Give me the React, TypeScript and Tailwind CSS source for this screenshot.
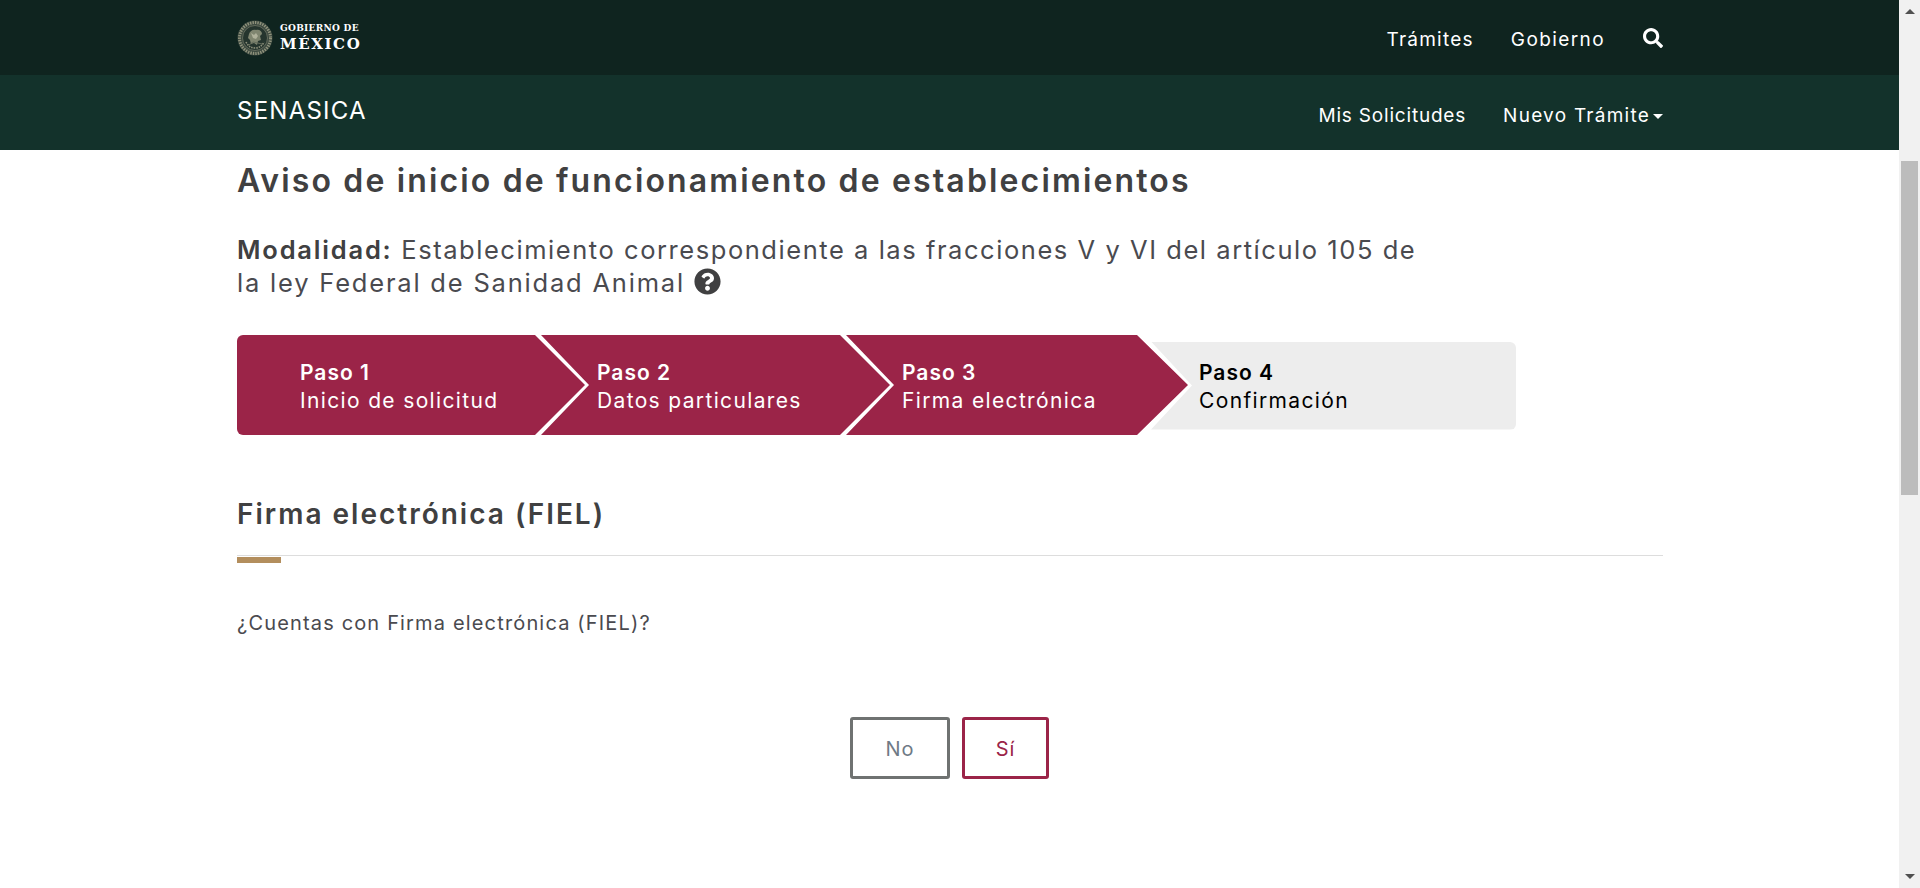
import { FaSearch, FaQuestionCircle } from 'react-icons/fa'

const sans = { fontFamily: 'Inter, "Open Sans", sans-serif' }

function Seal() {
  return (
    <svg width="36" height="36" viewBox="0 0 36 36" fill="none">
      <circle cx="18" cy="18" r="17.5" fill="#3d4a40" />
      <circle cx="18" cy="18" r="15.5" stroke="#8f927c" strokeWidth="3" strokeDasharray="1.4 1.1" />
      <circle cx="18" cy="18" r="12.5" fill="#25352e" stroke="#6f7565" strokeWidth="0.8" />
      <path d="M12 14c1-3 4-5 7-4 3-1 6 1 6 4l-2 2 1 4-3 1-1 4-3-2-3 1-1-4-2-2z" fill="#7f8570" />
      <path d="M14 13l3 2 2-2 2 3-2 3-3-1z" fill="#b0b29c" />
      <path d="M9 22c2 4 5 6 9 6s7-2 9-6" stroke="#8f927c" strokeWidth="1.6" strokeDasharray="1.5 1" />
      <path d="M12 25l4-3 5 1 4 1" stroke="#656d5d" strokeWidth="1" />
    </svg>
  )
}

function Scrollbar() {
  return (
    <div className="flex h-[888px] w-[21px] shrink-0 flex-col items-center bg-[#f1f1f1]">
      <div className="mt-[9px] h-0 w-0 border-x-[5px] border-b-[5px] border-x-transparent border-b-[#505050]" />
      <div className="mt-[147px] h-[334px] w-[17px] bg-[#bcbcbc]" />
      <div className="mt-[379px] h-0 w-0 border-x-[5px] border-t-[5px] border-x-transparent border-t-[#505050]" />
    </div>
  )
}

function Step({ title, text, className, inner }: { title: string; text: string; className: string; inner: string }) {
  return (
    <div className={className}>
      <div className={inner}>
        <p className="text-[21px] font-semibold leading-[28px] tracking-[1px]">{title}</p>
        <p className="text-[21px] leading-[28px] tracking-[1.35px]">{text}</p>
      </div>
    </div>
  )
}

export default function App() {
  return (
    <div className="flex h-[888px] w-full overflow-hidden bg-white" style={sans}>
      <div className="min-w-0 flex-1">
        <div className="h-[75px] bg-[#0f241f]">
          <div className="ml-[237px] flex h-full w-[1426px] items-center justify-between">
            <div className="flex items-center gap-[7px]">
              <Seal />
              <div className="text-white" style={{ fontFamily: '"DejaVu Serif", serif' }}>
                <p className="text-[9px] font-bold leading-[13px] tracking-[0.3px]">GOBIERNO DE</p>
                <p className="text-[15px] font-bold leading-[18px] tracking-[1.6px]">MÉXICO</p>
              </div>
            </div>
            <div className="flex items-center text-[19px] text-white">
              <span className="mt-[5px] tracking-[1.25px]">Trámites</span>
              <span className="ml-[37px] mt-[5px] tracking-[1.4px]">Gobierno</span>
              <FaSearch className="ml-[38px] text-[20px]" />
            </div>
          </div>
        </div>
        <div className="h-[75px] bg-[#13322b]">
          <div className="ml-[237px] flex h-full w-[1426px] items-center justify-between text-white">
            <span className="mb-[3px] text-[24px] tracking-[1.25px]">SENASICA</span>
            <div className="mt-[7px] flex items-center text-[19px]">
              <span className="tracking-[0.8px]">Mis Solicitudes</span>
              <span className="ml-[37px] tracking-[1.25px]">Nuevo Trámite</span>
              <span className="ml-[3px] h-0 w-0 border-x-[5px] border-t-[5px] border-x-transparent border-t-white" />
            </div>
          </div>
        </div>

        <div className="ml-[237px] w-[1426px]">
          <h1 className="mt-[11px] text-[32px] font-semibold leading-[40px] tracking-[2.15px] text-[#404041]">
            Aviso de inicio de funcionamiento de establecimientos
          </h1>
          <p className="mt-[32px] text-[25.5px] leading-[33px] tracking-[1.55px] text-[#4a4a4f]">
            <span className="font-semibold tracking-[1.8px] text-[#404041]">Modalidad:</span> Establecimiento correspondiente a las fracciones V y VI del artículo 105 de
            <br />
            <span className="tracking-[1.8px]">la ley Federal de Sanidad Animal </span>
            <FaQuestionCircle className="inline-block align-[-3px] text-[27px] text-[#404041]" />
          </p>

          <div className="mt-[36px] flex h-[100px] items-center">
            <Step
              title="Paso 1"
              text="Inicio de solicitud"
              className="relative z-30 flex h-[100px] w-[348px] shrink-0 items-center rounded-l-md bg-[#9b2448] pt-[3px] text-white [clip-path:polygon(0_0,298px_0,348px_50px,298px_100px,0_100px)]"
              inner="pl-[63px]"
            />
            <Step
              title="Paso 2"
              text="Datos particulares"
              className="relative z-20 -ml-[44px] flex h-[100px] w-[349px] shrink-0 items-center bg-[#9b2448] pt-[3px] text-white [clip-path:polygon(0_0,299px_0,349px_50px,299px_100px,0_100px,48px_50px)]"
              inner="pl-[56px]"
            />
            <Step
              title="Paso 3"
              text="Firma electrónica"
              className="relative z-10 -ml-[44px] flex h-[100px] w-[342px] shrink-0 items-center bg-[#9b2448] pt-[3px] text-white [clip-path:polygon(0_0,291px_0,342px_50px,291px_100px,0_100px,48px_50px)]"
              inner="pl-[56px]"
            />
            <Step
              title="Paso 4"
              text="Confirmación"
              className="-ml-[47px] mt-[1px] flex h-[88px] w-[375px] shrink-0 items-center rounded-r-md bg-[#ededed] pt-[2px] text-black [clip-path:polygon(10px_0,100%_0,100%_100%,10px_100%,51px_50%)]"
              inner="pl-[58px]"
            />
          </div>

          <h2 className="mt-[60px] text-[28px] font-semibold leading-[38px] tracking-[2px] text-[#404041]">Firma electrónica (FIEL)</h2>
          <div className="mt-[22px] h-px bg-[#dddddd]" />
          <div className="mt-px h-[6px] w-[44px] bg-[#b38e5d]" />
          <p className="mt-[46px] text-[20px] leading-[28px] tracking-[1.16px] text-[#4a4a4f]">¿Cuentas con Firma electrónica (FIEL)?</p>
          <div className="ml-[613px] mt-[80px] flex gap-[12px]">
            <button className="h-[62px] w-[100px] rounded-[3px] border-[3px] border-[#6f7271] pt-px text-[20px] tracking-[1px] text-[#6f7a86]">No</button>
            <button className="h-[62px] w-[87px] rounded-[3px] border-[3px] border-[#9b2448] pt-px text-[20px] tracking-[1px] text-[#9b2448]">Sí</button>
          </div>
        </div>
      </div>
      <Scrollbar />
    </div>
  )
}
